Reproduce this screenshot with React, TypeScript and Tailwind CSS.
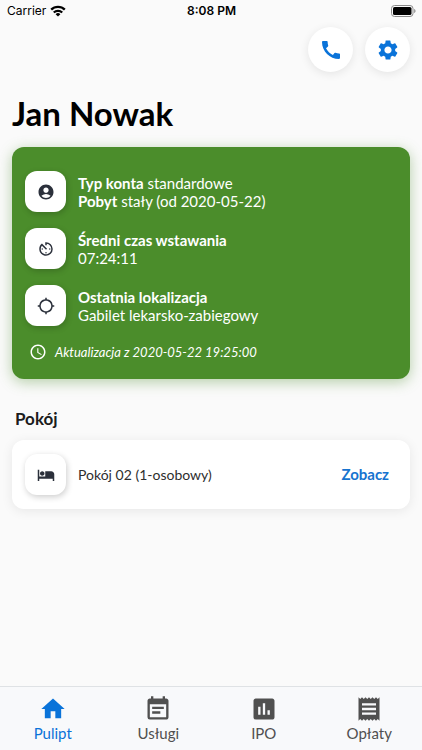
import type { ReactNode } from 'react';
import type { IconType } from 'react-icons';
import {
    MdAccessTime,
    MdAccountCircle,
    MdAvTimer,
    MdCall,
    MdEventNote,
    MdHome,
    MdHotel,
    MdInsertChart,
    MdLocationSearching,
    MdReceipt,
    MdSettings,
} from 'react-icons/md';

const tabs = [
    { icon: MdHome, label: 'Pulipt', active: true },
    { icon: MdEventNote, label: 'Usługi', active: false },
    { icon: MdInsertChart, label: 'IPO', active: false },
    { icon: MdReceipt, label: 'Opłaty', active: false },
];

function StatusBar() {
    return (
        <div className="grid grid-cols-3 items-center h-[22px] pl-[7px] pr-[6px] font-['Inter','Liberation_Sans',sans-serif] text-[12px] text-black">
            <div className="flex items-center gap-1">
                <span>Carrier</span>
                <svg width="16" height="12" viewBox="0 0 16 12" fill="none" stroke="currentColor" strokeWidth="2.3">
                    <path d="M1.2 4.6a9.6 9.6 0 0 1 13.6 0" />
                    <path d="M3.8 7.5a6 6 0 0 1 8.4 0" />
                    <path d="M8 11.6 5.6 9.2a3.4 3.4 0 0 1 4.8 0z" fill="currentColor" stroke="none" />
                </svg>
            </div>
            <span className="text-center font-semibold">8:08 PM</span>
            <svg className="justify-self-end" width="25" height="12" viewBox="0 0 25 12">
                <rect x="0.5" y="0.5" width="21.5" height="11" rx="3" fill="none" stroke="#8a8a8a" />
                <rect x="2" y="2" width="18.5" height="8" rx="1.6" fill="#000" />
                <path d="M23.2 4v4c.8-.3 1.3-1.1 1.3-2s-.5-1.7-1.3-2z" fill="#8a8a8a" />
            </svg>
        </div>
    );
}

function RoundButton({ icon: Icon, label }: { icon: IconType; label: string }) {
    return (
        <button
            type="button"
            aria-label={label}
            className="flex items-center justify-center size-[45px] rounded-full bg-white text-[#0a73d9] shadow-[0_2px_10px_rgba(0,0,0,0.09)]"
        >
            <Icon size={24} />
        </button>
    );
}

function IconTile({ icon: Icon }: { icon: IconType }) {
    return (
        <div className="flex items-center justify-center shrink-0 size-[41px] rounded-xl bg-white text-[#2b303b] shadow-[1px_2px_6px_rgba(0,0,0,0.2)]">
            <Icon size={18} />
        </div>
    );
}

function InfoRow({ icon, children }: { icon: IconType; children: ReactNode }) {
    return (
        <div className="flex items-center gap-3">
            <IconTile icon={icon} />
            <div className="text-[15px] leading-[18px]">{children}</div>
        </div>
    );
}

export default function App() {
    return (
        <div className="min-h-screen flex flex-col bg-[#fafafa] font-['Lato','Noto_Sans',sans-serif]">
            <StatusBar />

            <main className="flex-1 px-[12px] pt-[5px]">
                <div className="flex justify-end gap-3">
                    <RoundButton icon={MdCall} label="Zadzwoń" />
                    <RoundButton icon={MdSettings} label="Ustawienia" />
                </div>

                <h1 className="mt-5 text-[33px] leading-[42px] font-bold text-black">Jan Nowak</h1>

                {/* Account summary */}
                <section className="mt-[13px] px-[13px] pt-6 pb-[17px] rounded-xl bg-[#4b8d2b] text-white shadow-[0_3px_14px_rgba(75,141,43,0.4)]">
                    <div className="flex flex-col gap-4">
                        <InfoRow icon={MdAccountCircle}>
                            <p><b>Typ konta</b> standardowe</p>
                            <p><b>Pobyt</b> stały (od 2020-05-22)</p>
                        </InfoRow>
                        <InfoRow icon={MdAvTimer}>
                            <p className="font-bold">Średni czas wstawania</p>
                            <p>07:24:11</p>
                        </InfoRow>
                        <InfoRow icon={MdLocationSearching}>
                            <p className="font-bold">Ostatnia lokalizacja</p>
                            <p>Gabilet lekarsko-zabiegowy</p>
                        </InfoRow>
                    </div>
                    <div className="flex items-center gap-2 mt-4 pl-1 text-[13px] leading-[20px] italic">
                        <MdAccessTime size={18} />
                        <span>Aktualizacja z 2020-05-22 19:25:00</span>
                    </div>
                </section>

                {/* Room */}
                <h2 className="mt-7 pl-[3px] text-[17px] leading-[24px] font-bold text-[#1c1c1c]">Pokój</h2>
                <section className="flex items-center gap-3 mt-[9px] pl-[13px] pr-[21px] py-[14px] rounded-xl bg-white shadow-[0_2px_12px_rgba(0,0,0,0.08)]">
                    <IconTile icon={MdHotel} />
                    <span className="flex-1 text-[14px] text-[#2e2e2e]">Pokój 02 (1-osobowy)</span>
                    <a href="#" className="text-[15px] font-bold text-[#1673cf]">Zobacz</a>
                </section>
            </main>

            <nav className="grid grid-cols-4 h-16 pt-2 border-t border-[#dfe2e5] bg-[#f8f9fb]">
                {tabs.map(({ icon: Icon, label, active }) => (
                    <a
                        key={label}
                        href="#"
                        className={`flex flex-col items-center text-[15px] leading-[20px] ${active ? 'text-[#0a73d9]' : 'text-[#505050]'}`}
                    >
                        <Icon size={28} />
                        {label}
                    </a>
                ))}
            </nav>
        </div>
    );
}
